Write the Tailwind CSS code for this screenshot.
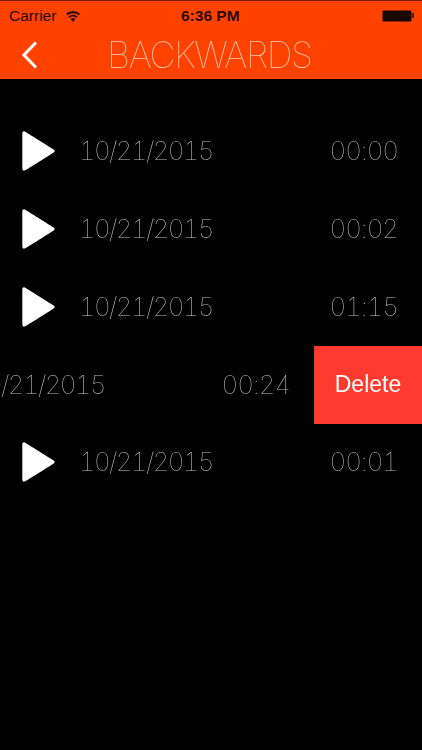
<!DOCTYPE html>
<html lang="en">
    <head>
        <meta charset="utf-8">
        <title>Backwards</title>
        <script src="https://cdn.jsdelivr.net/npm/@tailwindcss/browser@4"></script>
    </head>
    <body class="bg-black w-[422px] h-[750px] overflow-hidden antialiased font-['Inter',sans-serif]">
        <!-- header with status bar -->
        <div class="bg-[#ff4200] h-[79px] border-t border-[#7a2000] border-b-[#a83000]">
            <div class="flex items-center justify-between h-[29px] pl-[9px] pr-[8px] text-[#2a0c00] font-['Liberation_Sans',sans-serif] relative">
                <div class="flex items-center gap-[9px] text-[15.500px]">
                    <span>Carrier</span>
                    <svg width="16" height="12" viewBox="0 0 16 12" fill="#2a0c00">
                        <path d="M8 12L5.6 9.1a3.6 3.6 0 0 1 4.8 0z"/>
                        <path d="M4.6 7.9L3.4 6.5a7 7 0 0 1 9.2 0L11.4 7.900a5.200 5.200 0 0 0-6.800 0z"/>
                        <path d="M2.4 5.3L1 3.7a10.6 10.6 0 0 1 14 0L13.600 5.300a8.600 8.600 0 0 0-11.200 0z"/>
                    </svg>
                </div>
                <span class="absolute left-[181px] text-[15.500px] font-bold">6:36 PM</span>
                <div class="flex items-center">
                    <div class="w-[30px] h-[12px] bg-[#1a0700] rounded-[2px] border border-[#8a2600]"></div>
                    <div class="w-[2px] h-[5px] bg-[#5a1800]"></div>
                </div>
            </div>
            <div class="flex items-center h-[49px] relative">
                <svg class="ml-[21px]" width="17" height="28" viewBox="0 0 17 28" fill="none" stroke="white" stroke-width="3">
                    <path d="M15 1.500L3 14l12 12.500"/>
                </svg>
                <span class="absolute left-[107px] text-[36px] font-thin text-[#ffd0bc] tracking-[-1.400px] leading-none will-change-transform">BACKWARDS</span>
            </div>
        </div>

        <!-- recordings -->
        <div class="pt-[33.500px] flex flex-col text-[#bcbcbc] text-[26px] font-thin tabular-nums will-change-transform">
            <div class="flex items-center h-[77.750px] pl-[22px] pr-[24px]">
                <svg width="33" height="40" viewBox="0 0 34 42" fill="white"><path d="M2.500 0.500C1 0 0 1 0 2.500v37C0 41 1 42 2.500 41.500c1 -0.300 29 -18 30.500 -19 1.300 -0.900 1.300 -2 0 -3C31.500 18.500 3.500 0.800 2.500 0.500z"/></svg>
                <span class="ml-[24px] pb-[1px] tracking-[-1.700px]">10/21/2015</span>
                <span class="ml-auto pb-[1px] tracking-[-1.100px]">00:00</span>
            </div>
            <div class="flex items-center h-[77.750px] pl-[22px] pr-[24px]">
                <svg width="33" height="40" viewBox="0 0 34 42" fill="white"><path d="M2.500 0.500C1 0 0 1 0 2.500v37C0 41 1 42 2.500 41.500c1 -0.300 29 -18 30.500 -19 1.300 -0.900 1.300 -2 0 -3C31.500 18.500 3.500 0.800 2.500 0.500z"/></svg>
                <span class="ml-[24px] pb-[1px] tracking-[-1.700px]">10/21/2015</span>
                <span class="ml-auto pb-[1px] tracking-[-1.100px]">00:02</span>
            </div>
            <div class="flex items-center h-[77.750px] pl-[22px] pr-[24px]">
                <svg width="33" height="40" viewBox="0 0 34 42" fill="white"><path d="M2.500 0.500C1 0 0 1 0 2.500v37C0 41 1 42 2.500 41.500c1 -0.300 29 -18 30.500 -19 1.300 -0.900 1.300 -2 0 -3C31.500 18.500 3.500 0.800 2.500 0.500z"/></svg>
                <span class="ml-[24px] pb-[1px] tracking-[-1.700px]">10/21/2015</span>
                <span class="ml-auto pb-[1px] tracking-[-1.100px]">01:15</span>
            </div>
            <!-- swiped open row -->
            <div class="h-[77.750px] relative overflow-hidden">
                <div class="flex items-center h-full pl-[22px] pr-[24px] -translate-x-[108px]">
                    <svg width="33" height="40" viewBox="0 0 34 42" fill="white"><path d="M2.500 0.500C1 0 0 1 0 2.500v37C0 41 1 42 2.500 41.500c1 -0.300 29 -18 30.500 -19 1.300 -0.900 1.300 -2 0 -3C31.500 18.500 3.500 0.800 2.500 0.500z"/></svg>
                    <span class="ml-[24px] pb-[1px] tracking-[-1.700px]">10/21/2015</span>
                    <span class="ml-auto pb-[1px] tracking-[-1.100px]">00:24</span>
                </div>
                <div class="absolute right-0 top-0 w-[108px] h-full bg-[#ff3b30] text-[#fdfdfd] flex items-center justify-center text-[23px] font-normal font-['Liberation_Sans',sans-serif]">Delete</div>
            </div>
            <div class="flex items-center h-[77.750px] pl-[22px] pr-[24px]">
                <svg width="33" height="40" viewBox="0 0 34 42" fill="white"><path d="M2.500 0.500C1 0 0 1 0 2.500v37C0 41 1 42 2.500 41.500c1 -0.300 29 -18 30.500 -19 1.300 -0.900 1.300 -2 0 -3C31.500 18.500 3.500 0.800 2.500 0.500z"/></svg>
                <span class="ml-[24px] pb-[1px] tracking-[-1.700px]">10/21/2015</span>
                <span class="ml-auto pb-[1px] tracking-[-1.100px]">00:01</span>
            </div>
        </div>
    </body>
</html>
